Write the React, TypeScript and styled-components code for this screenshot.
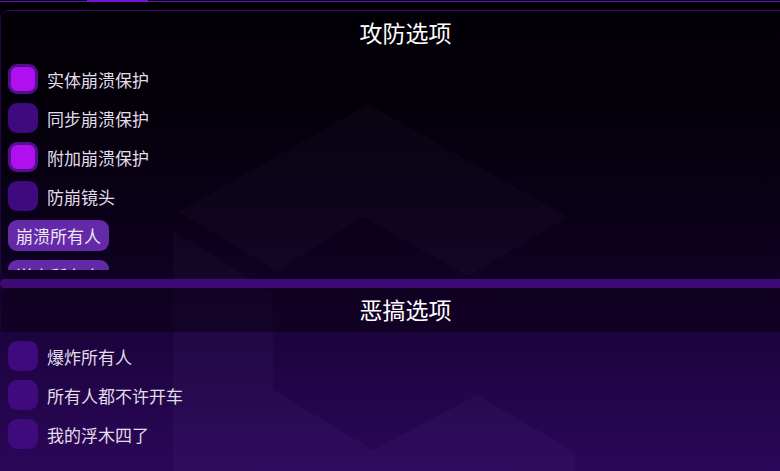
import React from "react";
import styled, { createGlobalStyle } from "styled-components";

const GlobalStyle = createGlobalStyle`
  *, *::before, *::after { box-sizing: border-box; }
  html, body { margin: 0; padding: 0; }
  body {
    width: 780px;
    height: 471px;
    overflow: hidden;
    background: linear-gradient(to bottom, #020006 0%, #06010f 25%, #0f0224 50%, #1e0442 75%, #2c0759 100%);
    font-family: "Noto Sans CJK SC", "Noto Sans", sans-serif;
  }
`;

const Root = styled.div`
  position: relative;
  width: 780px;
  height: 471px;
  overflow: hidden;
`;

const Logo = styled.svg`
  position: absolute;
  inset: 0;
  pointer-events: none;
`;

const Content = styled.div`
  position: relative;
  display: flex;
  flex-direction: column;
  height: 100%;
`;

const TabStrip = styled.div`
  position: relative;
  flex: none;
  height: 2px;
  display: flex;
  align-items: flex-end;
  &::before {
    content: "";
    position: absolute;
    left: 0;
    right: 0;
    bottom: 0;
    height: 1px;
    background: #5b12b4;
  }
`;

const TabIndicator = styled.div`
  position: relative;
  margin-left: 87px;
  width: 61px;
  height: 2px;
  background: #7412d6;
`;

const Card = styled.section<{ $first?: boolean }>`
  display: flex;
  flex-direction: column;
  margin-right: -30px;
  border-radius: 9px 0 0 9px;
  overflow: hidden;
  ${(p) =>
    p.$first
      ? `
    flex: none;
    margin-top: 8px;
    height: 268px;
    border-top: 1px solid #36095f;
    border-left: 1px solid #220640;
    background: rgba(0, 0, 0, 0.25);
  `
      : `
    flex: 1;
    border-left: 1px solid transparent;
    background: transparent;
  `}
`;

const CardHeader = styled.div<{ $dark?: boolean }>`
  flex: none;
  height: 44px;
  padding-bottom: 3px;
  display: flex;
  align-items: center;
  justify-content: center;
  color: #ffffff;
  font-size: 23px;
  background: ${(p) => (p.$dark ? "rgba(12, 0, 24, 0.6)" : "transparent")};
`;

const CardBody = styled.div<{ $clip?: number }>`
  display: flex;
  flex-direction: column;
  align-items: flex-start;
  gap: 9px;
  padding: 9px 7px 0 7px;
  overflow: hidden;
  ${(p) => (p.$clip ? `height: ${p.$clip}px; flex: none;` : "")}
`;

const Row = styled.label`
  display: flex;
  align-items: center;
  gap: 9px;
  height: 30px;
  flex: none;
  color: #e2dde9;
  font-size: 17px;
  cursor: pointer;
`;

const Box = styled.span<{ $on?: boolean }>`
  width: 30px;
  height: 30px;
  border-radius: 9px;
  flex: none;
  background: ${(p) => (p.$on ? "#b010ef" : "#3e0a7d")};
  border: ${(p) => (p.$on ? "3px solid #52118c" : "none")};
`;

const ActionButton = styled.button`
  flex: none;
  height: 31px;
  padding: 0 8px;
  border: none;
  border-radius: 9px;
  background: #6429a9;
  color: #ece6f3;
  font-family: inherit;
  font-size: 17px;
  line-height: 31px;
  cursor: pointer;
`;

const Divider = styled.div`
  flex: none;
  height: 9px;
  margin-top: 1px;
  margin-right: -12px;
  border-radius: 6px 0 0 6px;
  background: #3c0a73;
`;

const defenseOptions = [
  { label: "实体崩溃保护", on: true },
  { label: "同步崩溃保护", on: false },
  { label: "附加崩溃保护", on: true },
  { label: "防崩镜头", on: false },
];

const prankOptions = [
  { label: "爆炸所有人", on: false },
  { label: "所有人都不许开车", on: false },
  { label: "我的浮木四了", on: false },
];

export default function App() {
  return (
    <>
      <GlobalStyle />
      <Root>
        <Logo width="780" height="471" viewBox="0 0 780 471">
          <g fill="rgba(200,170,255,0.035)">
            <polygon points="179,212 368,104 568,217 468,276 363,217 277,271" />
            <polygon points="173,230 273,293 273,390 373,450 477,395 575,452 575,471 173,471" />
          </g>
        </Logo>
        <Content>
          <TabStrip>
            <TabIndicator />
          </TabStrip>
          <Card $first>
            <CardHeader>攻防选项</CardHeader>
            <CardBody $clip={215}>
              {defenseOptions.map((o) => (
                <Row key={o.label}>
                  <Box $on={o.on} />
                  {o.label}
                </Row>
              ))}
              <ActionButton>崩溃所有人</ActionButton>
              <ActionButton>送人所有人</ActionButton>
            </CardBody>
          </Card>
          <Divider />
          <Card>
            <CardHeader $dark>恶搞选项</CardHeader>
            <CardBody>
              {prankOptions.map((o) => (
                <Row key={o.label}>
                  <Box $on={o.on} />
                  {o.label}
                </Row>
              ))}
            </CardBody>
          </Card>
        </Content>
      </Root>
    </>
  );
}
